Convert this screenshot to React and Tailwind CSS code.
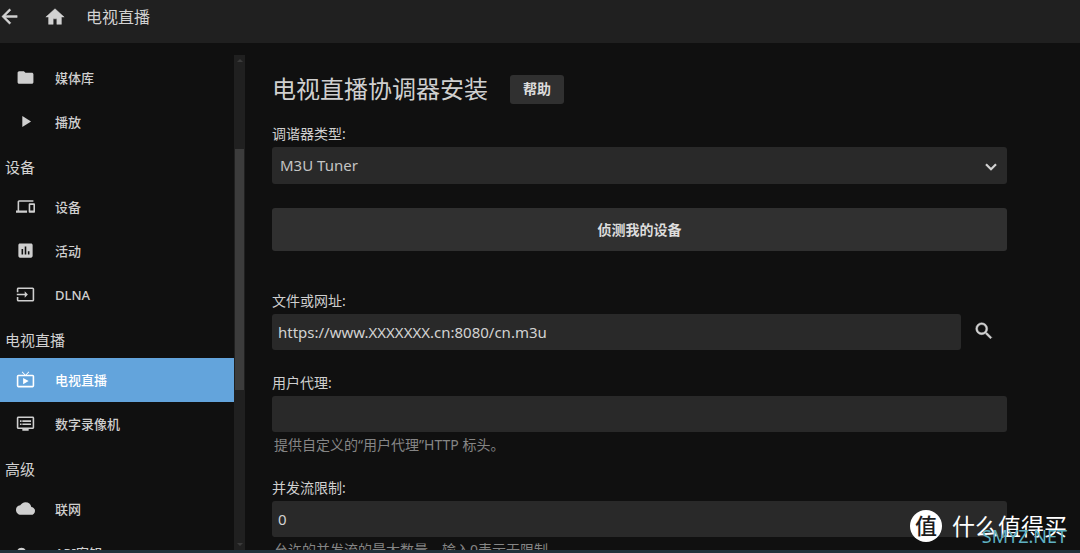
import React, { useState } from 'react';
import {
  MdArrowBack,
  MdCloud,
  MdDevices,
  MdDvr,
  MdFolder,
  MdHome,
  MdInput,
  MdLiveTv,
  MdPlayArrow,
  MdPoll,
  MdSearch,
  MdVpnKey,
} from 'react-icons/md';

const sections = [
  {
    items: [
      { label: '媒体库', icon: MdFolder },
      { label: '播放', icon: MdPlayArrow },
    ],
  },
  {
    title: '设备',
    items: [
      { label: '设备', icon: MdDevices },
      { label: '活动', icon: MdPoll },
      { label: 'DLNA', icon: MdInput },
    ],
  },
  {
    title: '电视直播',
    items: [
      { label: '电视直播', icon: MdLiveTv, active: true },
      { label: '数字录像机', icon: MdDvr },
    ],
  },
  {
    title: '高级',
    items: [
      { label: '联网', icon: MdCloud },
      { label: 'API密钥', icon: MdVpnKey },
    ],
  },
];

// thickens only the glyph, the icons' bounding path stays invisible
const boldIcon = '[&>path:last-child]:stroke-current [&>path:last-child]:stroke-[0.5]';

const fieldClass =
  'block w-full h-9 rounded-[3px] bg-[#292929] px-1.5 text-[15px] text-[#d2d2d2] outline-none';

const Header = () => (
  <header className="flex h-[43px] flex-none items-center bg-[#202020] pb-2.5 text-[#d2d2d2]">
    <button type="button" aria-label="返回" className="-ml-0.5">
      <MdArrowBack className={`h-[23px] w-[23px] ${boldIcon}`} />
    </button>
    <button type="button" aria-label="主页" className="ml-[23px]">
      <MdHome className={`h-[22px] w-[22px] ${boldIcon}`} />
    </button>
    <h1 className="ml-5 text-base">电视直播</h1>
  </header>
);

const NavItem = ({ label, icon: Icon, active }) => (
  <a
    href="#"
    className={`flex h-11 items-center pb-0.5 pl-4 text-[13px] font-medium ${
      active ? 'bg-[#63a4dc] text-white' : 'text-[#cfcfcf]'
    }`}
  >
    <Icon className="mr-5 h-[19px] w-[19px] flex-none" />
    <span className="pt-1">{label}</span>
  </a>
);

const Sidebar = () => (
  <nav className="w-[234px] flex-none overflow-hidden pt-[13px]">
    {sections.map((section, i) => (
      <div key={i}>
        {section.title && (
          <h2 className="flex h-[41px] items-center pl-[5px] pt-1.5 text-[15px] text-[#d2d2d2]">
            {section.title}
          </h2>
        )}
        {section.items.map((item) => (
          <NavItem key={item.label} {...item} />
        ))}
      </div>
    ))}
  </nav>
);

const ScrollTrack = () => (
  <div className="mt-3 flex w-[11px] flex-none flex-col items-center bg-[#202020]">
    <div className="mt-1 h-0 w-0 border-x-3 border-b-3 border-x-transparent border-b-[#3a3a3a]" />
    <div className="h-[87px]" />
    <div className="h-[241px] w-[9px] bg-[#3c3c3c]" />
    <div className="mt-auto mb-1 h-0 w-0 border-x-3 border-t-3 border-x-transparent border-t-[#3a3a3a]" />
  </div>
);

const Label = ({ htmlFor, children }) => (
  <label htmlFor={htmlFor} className="block h-[23px] text-[14px] leading-5 text-[#cfcfcf]">
    {children}
  </label>
);

const TunerForm = () => {
  const [type, setType] = useState('m3u');
  const [url, setUrl] = useState('https://www.XXXXXXX.cn:8080/cn.m3u');
  const [userAgent, setUserAgent] = useState('');
  const [limit, setLimit] = useState('0');

  return (
    <form className="min-w-0 flex-1 overflow-hidden pl-[27px] pr-[73px] pt-8">
      <div className="flex h-[29px] items-center">
        <h2 className="pb-0.5 text-2xl text-[#cfcfcf]">电视直播协调器安装</h2>
        <button
          type="button"
          className="ml-[22px] h-[29px] w-[54px] rounded-[3px] bg-[#303030] pb-0.5 text-[14px] font-bold text-[#dcdcdc]"
        >
          帮助
        </button>
      </div>

      <div className="mt-5">
        <Label htmlFor="type">调谐器类型:</Label>
        <div className="relative">
          <select
            id="type"
            value={type}
            onChange={(e) => setType(e.target.value)}
            className="block h-[37px] w-full appearance-none rounded-[3px] bg-[#292929] px-2 text-[15px] text-[#c4c4c4] outline-none"
          >
            <option value="m3u">M3U Tuner</option>
            <option value="hdhomerun">HD Homerun</option>
          </select>
          <svg
            viewBox="0 0 12 8"
            className="pointer-events-none absolute right-[10px] top-4 h-2 w-3"
            fill="none"
            stroke="#d2d2d2"
            strokeWidth="2.2"
          >
            <path d="M1 1.2 6 6.2 11 1.2" />
          </svg>
        </div>
      </div>

      <button
        type="button"
        className="mt-6 block h-[43px] w-full rounded-[3px] bg-[#303030] text-[14px] font-bold text-[#dcdcdc]"
      >
        侦测我的设备
      </button>

      <div className="mt-10">
        <Label htmlFor="url">文件或网址:</Label>
        <div className="flex items-center">
          <input
            id="url"
            type="text"
            value={url}
            onChange={(e) => setUrl(e.target.value)}
            className={fieldClass}
          />
          <button
            type="button"
            aria-label="搜索"
            className="mx-3 flex-none pb-0.5 text-[#d2d2d2]"
          >
            <MdSearch className={`h-[22px] w-[22px] ${boldIcon}`} />
          </button>
        </div>
      </div>

      <div className="mt-[23px]">
        <Label htmlFor="agent">用户代理:</Label>
        <input
          id="agent"
          type="text"
          value={userAgent}
          onChange={(e) => setUserAgent(e.target.value)}
          className={fieldClass}
        />
        <p className="mt-[3px] pl-0.5 text-[14px] leading-5 text-[#858585]">
          提供自定义的“用户代理”HTTP 标头。
        </p>
      </div>

      <div className="mt-[23px]">
        <Label htmlFor="limit">并发流限制:</Label>
        <input
          id="limit"
          type="text"
          inputMode="numeric"
          value={limit}
          onChange={(e) => setLimit(e.target.value)}
          className={fieldClass}
        />
        <p className="mt-[3px] pl-0.5 text-[14px] leading-5 text-[#858585]">
          允许的并发流的最大数量。输入0表示无限制。
        </p>
      </div>
    </form>
  );
};

const Watermark = () => (
  <div className="pointer-events-none absolute bottom-[11px] right-[13px] flex items-center text-white">
    <span className="flex h-8 w-8 items-center justify-center rounded-full bg-white pb-0.5 text-[22px] font-medium leading-none text-[#1c1c1c]">
      值
    </span>
    <span className="ml-[10px] text-[23px] leading-8">什么值得买</span>
    <span className="absolute right-0 top-3 text-[18px] leading-7 text-[#5fb0c2]">SMYZ.NET</span>
  </div>
);

const App = () => (
  <div className="relative flex h-screen flex-col overflow-hidden bg-[#101010] font-['Noto_Sans','Noto_Sans_CJK_SC',sans-serif]">
    <Header />
    <div className="flex min-h-0 flex-1">
      <Sidebar />
      <ScrollTrack />
      <TunerForm />
    </div>
    <div className="h-[3px] flex-none bg-[#1f303a]" />
    <Watermark />
  </div>
);

export default App;
